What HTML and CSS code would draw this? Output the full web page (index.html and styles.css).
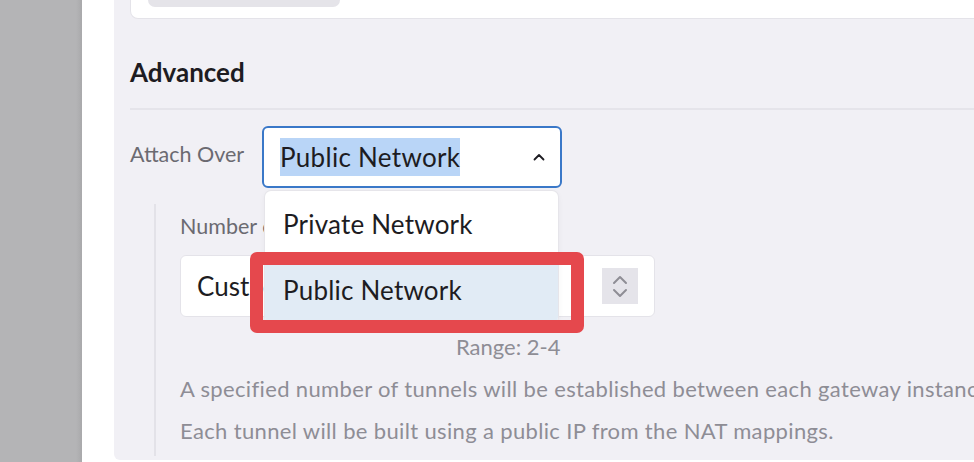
FILE: index.html
```html
<!DOCTYPE html>
<html>
<head>
<meta charset="utf-8">
<link rel="stylesheet" href="styles.css">
</head>
<body>
<div class="shell">
  <div class="backdrop"></div>
  <div class="page">
    <div class="panel">
      <div class="top-card"><div class="pill"></div></div>
      <h2 class="section-title">Advanced</h2>
      <div class="divider"></div>
      <div class="field-row">
        <span class="field-label">Attach Over</span>
        <div class="select-wrap">
          <div class="select">
            <span class="select-value">Public Network</span>
            <svg class="chev" width="14" height="10" viewBox="0 0 14 10"><path d="M2.5 7.5 L7 3 L11.5 7.5" fill="none" stroke="#1d1c22" stroke-width="1.8" stroke-linecap="round" stroke-linejoin="round"/></svg>
          </div>
          <ul class="menu">
            <li class="option">Private Network</li>
            <li class="option active">Public Network</li>
          </ul>
          <div class="highlight-frame"></div>
        </div>
      </div>
      <div class="nested">
        <div class="sub-label">Number of Tunnels</div>
        <div class="number-input">
          <span class="number-value">Custom</span>
          <div class="spinner">
            <svg width="20" height="30" viewBox="0 0 20 30"><path d="M4 12 L10 6 L16 12" fill="none" stroke="#8e8d95" stroke-width="2" stroke-linecap="round" stroke-linejoin="round"/><path d="M4 19 L10 25 L16 19" fill="none" stroke="#8e8d95" stroke-width="2" stroke-linecap="round" stroke-linejoin="round"/></svg>
          </div>
        </div>
        <div class="range">Range: 2-4</div>
        <p class="help">A specified number of tunnels will be established between each gateway instance and each peer.</p>
        <p class="help">Each tunnel will be built using a public IP from the NAT mappings.</p>
      </div>
    </div>
  </div>
</div>
</body>
</html>
```

FILE: styles.css
```css
html, body {
  margin: 0;
  padding: 0;
  background: #ffffff;
}
body {
  font-family: Lato, "Noto Sans", sans-serif;
  width: 974px;
  height: 462px;
  overflow: hidden;
}
.shell {
  display: flex;
  height: 462px;
}
.backdrop {
  width: 82px;
  flex: none;
  background: linear-gradient(to right, #b4b4b6 0, #b4b4b6 76px, #a9a9ab 82px);
}
.page {
  flex: 1;
  background: #ffffff;
  padding-left: 32px;
  min-width: 0;
}
.panel {
  background: #f1f0f5;
  height: 460px;
  border-bottom-left-radius: 6px;
  padding-left: 16px;
  overflow: hidden;
}
.top-card {
  height: 18px;
  background: #ffffff;
  border: 1px solid #e4e3e9;
  border-top: none;
  border-radius: 0 0 0 8px;
  margin-right: -20px;
  padding-left: 17px;
}
.pill {
  width: 192px;
  height: 7px;
  background: #e5e4e9;
  border-radius: 0 0 8px 8px;
}
.section-title {
  margin: 0;
  padding-top: 38px;
  font-size: 26px;
  line-height: 30px;
  font-weight: 700;
  color: #1d1c22;
}
.divider {
  margin-top: 21px;
  height: 2px;
  background: #e5e4ea;
  margin-right: -20px;
}
.field-row {
  display: flex;
  align-items: flex-start;
  margin-top: 16px;
}
.field-label {
  width: 132px;
  flex: none;
  font-size: 21.5px;
  line-height: 28px;
  margin-top: 14px;
  color: #6b6a71;
}
.select-wrap {
  position: relative;
  z-index: 2;
}
.select {
  box-sizing: border-box;
  width: 300px;
  height: 62px;
  border: 2px solid #3a78c8;
  border-radius: 6px;
  background: #ffffff;
  display: flex;
  align-items: center;
  padding-left: 16px;
  padding-right: 14px;
}
.select-value {
  background: #b9d5f7;
  color: #1d1c22;
  font-size: 26px;
  letter-spacing: 0.3px;
  line-height: 38px;
}
.chev {
  margin-left: auto;
}
.menu {
  position: absolute;
  top: 65px;
  left: 3px;
  width: 293px;
  margin: 0;
  padding: 0;
  list-style: none;
  background: #ffffff;
  border-radius: 6px;
  box-shadow: 0 0 0 1px #e6e5ea, 0 2px 6px rgba(0,0,0,0.06);
  overflow: hidden;
}
.option {
  height: 66px;
  display: flex;
  align-items: center;
  padding-left: 18px;
  font-size: 26px;
  letter-spacing: 0.2px;
  color: #1d1c22;
}
.option.active {
  background: #e1ebf5;
}
.highlight-frame {
  position: absolute;
  left: -12px;
  top: 126px;
  width: 308px;
  height: 55px;
  border: 13px solid #e5484d;
  border-radius: 7px;
}
.nested {
  margin-top: 16px;
  margin-left: 24px;
  border-left: 2px solid #e3e2e8;
  padding-left: 24px;
  padding-top: 8px;
  height: 244px;
}
.sub-label {
  font-size: 21.5px;
  line-height: 28px;
  color: #6b6a71;
}
.number-input {
  box-sizing: border-box;
  margin-top: 15px;
  width: 475px;
  height: 62px;
  background: #ffffff;
  border: 1px solid #e4e3e9;
  border-radius: 6px;
  display: flex;
  align-items: center;
  padding-left: 16px;
  padding-right: 16px;
}
.number-value {
  font-size: 26px;
  color: #1d1c22;
}
.spinner {
  margin-left: auto;
  width: 36px;
  height: 36px;
  background: #e5e4ea;
  display: flex;
  align-items: center;
  justify-content: center;
}
.range {
  margin-top: 16px;
  margin-left: 276px;
  font-size: 22px;
  line-height: 28px;
  color: #8e8d95;
}
.help {
  margin: 0;
  margin-top: 14px;
  font-size: 22px;
  letter-spacing: 0.35px;
  line-height: 28px;
  color: #8e8d95;
  white-space: nowrap;
}
```
